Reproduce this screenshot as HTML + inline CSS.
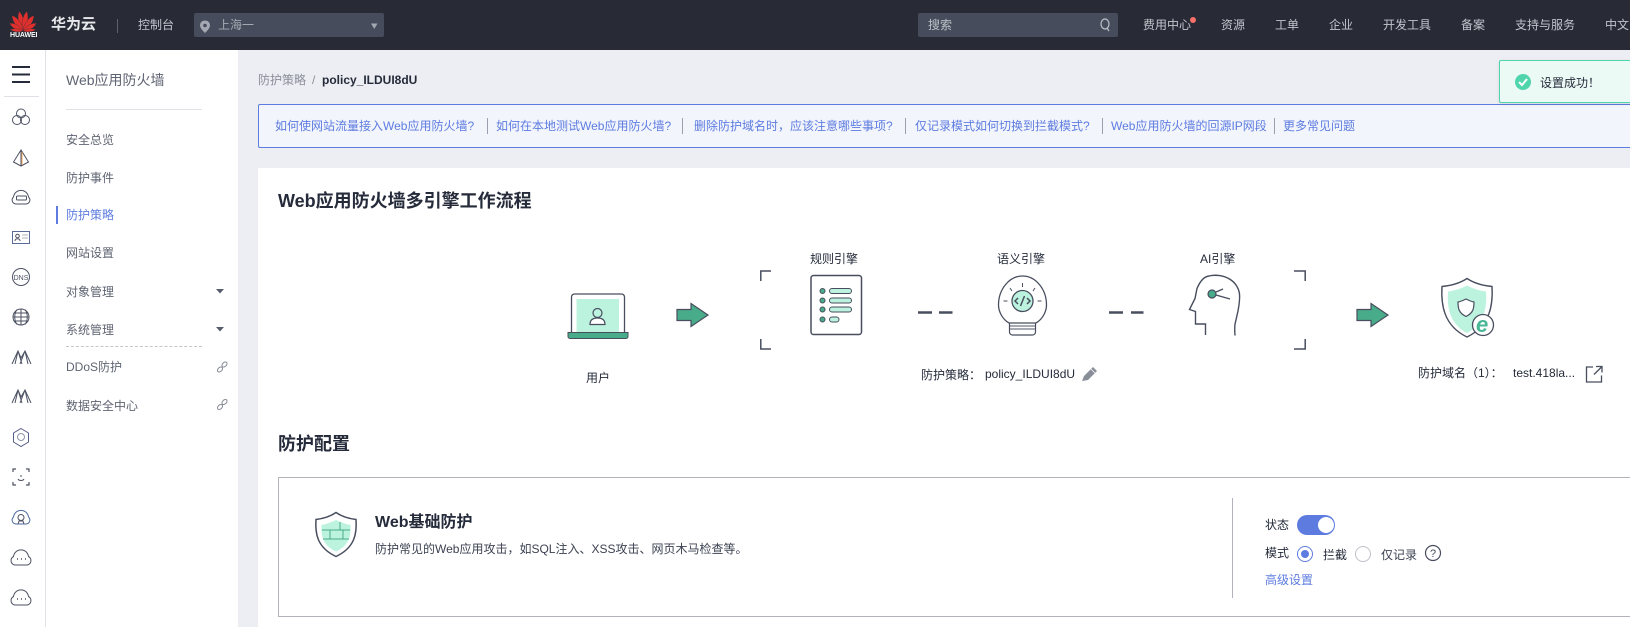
<!DOCTYPE html>
<html lang="zh-CN"><head><meta charset="utf-8"><title>Web应用防火墙</title>
<style>
html,body{margin:0;padding:0;width:1630px;height:627px;overflow:hidden;background:#edeef3}
body{font-family:"Liberation Sans","Noto Sans CJK SC",sans-serif;font-size:12px;color:#252b3a;position:relative}
.b{position:absolute}
.t{position:absolute;white-space:nowrap;line-height:16px;height:16px}
.n{color:#c2c5cc}
.m{color:#5f6472}
.l{color:#5e7ce0}
.h{font-weight:bold;color:#252b3a}
svg{position:absolute;left:0;top:0}
</style></head><body>
<div class="b" style="left:0;top:0;width:1630px;height:50px;background:#282b35"></div>
<div class="b" style="left:918px;top:13px;width:200px;height:24px;background:#464c5b;border-radius:2px"></div>
<div class="b" style="left:194px;top:13px;width:190px;height:24px;background:#464c5b;border-radius:2px"></div>
<div class="b" style="left:117px;top:19px;width:1px;height:14px;background:#5b606d"></div>
<div class="b" style="left:0;top:50px;width:45px;height:577px;background:#fff"></div>
<div class="b" style="left:45px;top:50px;width:1px;height:577px;background:#dfe1e6"></div>
<div class="b" style="left:46px;top:50px;width:192px;height:577px;background:#fff"></div>
<div class="b" style="left:4px;top:96px;width:35px;height:1px;background:#dfe1e6"></div>
<div class="b" style="left:66px;top:109px;width:136px;height:1px;background:#dfe1e6"></div>
<div class="b" style="left:66px;top:346px;width:136px;height:0;border-top:1px dashed #c4c6cc"></div>
<div class="b" style="left:56px;top:206px;width:2px;height:18px;background:#5e7ce0"></div>
<div class="b" style="left:258px;top:104px;width:1372px;height:42px;background:#f2f5fc;border:1px solid #5e7ce0;border-right:0;border-radius:2px 0 0 2px"></div>
<div class="b" style="left:258px;top:168px;width:1372px;height:459px;background:#fff"></div>
<div class="b" style="left:278px;top:477px;width:1352px;height:138px;border:1px solid #b3b3bb;border-right:0;background:#fff"></div>
<div class="b" style="left:1232px;top:498px;width:1px;height:100px;background:#b3b3bb"></div>
<div class="b" style="left:1499px;top:60px;width:131px;height:41px;background:#ebfaf5;border:1px solid #50d4ab;border-right:0;border-radius:2px 0 0 2px;box-shadow:0 1px 3px rgba(0,0,0,.1)"></div>

<span class="t" style="left:51px;top:16px;font-size:15px;line-height:18px;height:18px;font-weight:bold;color:#e8e9ec">华为云</span>
<span class="t n" style="left:138px;top:17px">控制台</span>
<span class="t" style="left:218px;top:17px;color:#a6a9b2">上海一</span>
<span class="t" style="left:928px;top:17px;color:#bfc2c9">搜索</span>
<span class="t n" style="left:1143px;top:17px">费用中心</span>
<span class="t n" style="left:1221px;top:17px">资源</span>
<span class="t n" style="left:1275px;top:17px">工单</span>
<span class="t n" style="left:1329px;top:17px">企业</span>
<span class="t n" style="left:1383px;top:17px">开发工具</span>
<span class="t n" style="left:1461px;top:17px">备案</span>
<span class="t n" style="left:1515px;top:17px">支持与服务</span>
<span class="t n" style="left:1605px;top:17px">中文</span>
<span class="t" style="left:10px;top:32px;font-size:7px;line-height:8px;height:8px;font-weight:bold;color:#fff;letter-spacing:-.1px">HUAWEI</span>

<span class="t m" style="left:66px;top:72px;font-size:14px">Web应用防火墙</span>
<span class="t m" style="left:66px;top:132px">安全总览</span>
<span class="t m" style="left:66px;top:170px">防护事件</span>
<span class="t l" style="left:66px;top:207px">防护策略</span>
<span class="t m" style="left:66px;top:245px">网站设置</span>
<span class="t m" style="left:66px;top:284px">对象管理</span>
<span class="t m" style="left:66px;top:322px">系统管理</span>
<span class="t m" style="left:66px;top:359px">DDoS防护</span>
<span class="t m" style="left:66px;top:398px">数据安全中心</span>

<span class="t" style="left:258px;top:72px;color:#8a8e99">防护策略</span>
<span class="t" style="left:312px;top:72px;color:#8a8e99">/</span>
<span class="t" style="left:322px;top:72px;color:#252b3a;font-weight:bold;font-size:12px">policy_ILDUI8dU</span>
<span class="t" style="left:1540px;top:75px;color:#252b3a">设置成功！</span>

<span class="t l" style="left:275px;top:118px">如何使网站流量接入Web应用防火墙?</span>
<span class="t l" style="left:496px;top:118px">如何在本地测试Web应用防火墙?</span>
<span class="t l" style="left:694px;top:118px">删除防护域名时，应该注意哪些事项?</span>
<span class="t l" style="left:915px;top:118px">仅记录模式如何切换到拦截模式?</span>
<span class="t l" style="left:1111px;top:118px">Web应用防火墙的回源IP网段</span>
<span class="t l" style="left:1283px;top:118px">更多常见问题</span>
<div class="b" style="left:487px;top:118px;width:1px;height:16px;background:#9aa0ad"></div>
<div class="b" style="left:682px;top:118px;width:1px;height:16px;background:#9aa0ad"></div>
<div class="b" style="left:905px;top:118px;width:1px;height:16px;background:#9aa0ad"></div>
<div class="b" style="left:1102px;top:118px;width:1px;height:16px;background:#9aa0ad"></div>
<div class="b" style="left:1274px;top:118px;width:1px;height:16px;background:#9aa0ad"></div>

<span class="t h" style="left:278px;top:190px;font-size:18px;line-height:22px;height:22px">Web应用防火墙多引擎工作流程</span>
<span class="t" style="left:810px;top:251px">规则引擎</span>
<span class="t" style="left:997px;top:251px">语义引擎</span>
<span class="t" style="left:1200px;top:251px">AI引擎</span>
<span class="t" style="left:586px;top:370px">用户</span>
<span class="t" style="left:921px;top:367px">防护策略：</span>
<span class="t" style="left:985px;top:366px">policy_ILDUI8dU</span>
<span class="t" style="left:1418px;top:365px">防护域名（1）：</span>
<span class="t" style="left:1513px;top:365px">test.418la...</span>
<span class="t h" style="left:278px;top:433px;font-size:18px;line-height:22px;height:22px">防护配置</span>
<span class="t h" style="left:375px;top:513px;font-size:16px;line-height:20px;height:20px">Web基础防护</span>
<span class="t" style="left:375px;top:541px;color:#3c4252">防护常见的Web应用攻击，如SQL注入、XSS攻击、网页木马检查等。</span>
<span class="t" style="left:1265px;top:517px">状态</span>
<span class="t" style="left:1265px;top:545px">模式</span>
<span class="t" style="left:1323px;top:547px">拦截</span>
<span class="t" style="left:1381px;top:547px;color:#3c4252">仅记录</span>
<span class="t l" style="left:1265px;top:572px">高级设置</span>

<svg width="1630" height="627" viewBox="0 0 1630 627" fill="none">
<!-- Huawei logo -->
<defs><linearGradient id="r" x1="0" y1="11" x2="0" y2="31" gradientUnits="userSpaceOnUse"><stop offset="0" stop-color="#f0504a"/><stop offset="1" stop-color="#c8101c"/></linearGradient></defs>
<g fill="#e0302e" stroke="#282b35" stroke-width=".3">
<path transform="rotate(-11 23 31)" d="M23 31C19.500 25 19.500 16 23 11C26.500 16 26.500 25 23 31Z"/>
<path transform="rotate(11 23 31)" d="M23 31C19.500 25 19.500 16 23 11C26.500 16 26.500 25 23 31Z"/>
<path transform="rotate(-35 23 31)" d="M23 31C19.500 26 19.500 17 23 12C26.500 17 26.500 26 23 31Z"/>
<path transform="rotate(35 23 31)" d="M23 31C19.500 26 19.500 17 23 12C26.500 17 26.500 26 23 31Z"/>
<path transform="rotate(-60 23 31)" d="M23 31C20 26 20 20 23 15.500C26 20 26 26 23 31Z"/>
<path transform="rotate(60 23 31)" d="M23 31C20 26 20 20 23 15.500C26 20 26 26 23 31Z"/>
<path transform="rotate(-84 23 31)" d="M23 31C21 27 21 22 23 18C25 22 25 27 23 31Z"/>
<path transform="rotate(84 23 31)" d="M23 31C21 27 21 22 23 18C25 22 25 27 23 31Z"/>
</g>
<!-- pin and caret -->
<path d="M205 20.500c-3 0-5 2-5 5 0 3 5 7.500 5 7.500s5-4.500 5-7.500c0-3-2-5-5-5z" fill="#a4a8b2"/><circle cx="205" cy="25.500" r="1.800" fill="#464c5b"/>
<path d="M371 23.500h6.500l-3.250 5.500z" fill="#a4a8b2"/>
<!-- search -->
<ellipse cx="1105" cy="24" rx="4" ry="5" stroke="#bfc2c9" stroke-width="1.200"/><path d="M1107 28l2 3" stroke="#bfc2c9" stroke-width="1.200"/>
<circle cx="1193" cy="20" r="3" fill="#f66f6a"/>
<!-- hamburger -->
<path d="M12 67h18M12 74.500h18M12 82h18" stroke="#252b3a" stroke-width="2"/>
<!-- rail icons -->
<g stroke="#4d5263" stroke-width="1">
<circle cx="21" cy="113.500" r="4.500"/><circle cx="17" cy="120" r="4.500"/><circle cx="25" cy="120" r="4.500"/>
<path d="M21 150v16M21 150l-7.500 12 7.500 4 7.500-4z"/><path d="M22 152v13" stroke="#f0a860"/>
<path d="M16 204a4 4 0 0 1-2.500-7a7.550 7.550 0 0 1 15 0a4 4 0 0 1-2.500 7z"/><rect x="16.500" y="196" width="10" height="4" rx="1"/>
<rect x="12.500" y="231.500" width="17" height="12" stroke="#5a6a9a"/><circle cx="17.500" cy="236" r="1.800"/><path d="M15 241c0-3 5-3 5 0"/><path d="M22 235h6M22 238h6" stroke="#b0b3bd"/>
<circle cx="21" cy="277" r="8.500"/>
<circle cx="21" cy="317" r="8"/><path d="M13 317h16M21 309v16M17 309.500c-3 4-3 11 0 15M25 309.500c3 4 3 11 0 15M14.500 313h13M14.500 321h13"/>
<path d="M12 364L18 351L21 358L25 351L31 364M15 364L18 351M28 364L25 351M18 351L22 364M25 351L20 364"/>
<path d="M12 403L18 390L21 397L25 390L31 403M15 403L18 390M28 403L25 390M18 390L22 403M25 390L20 403"/>
<path d="M21 428.500l7.500 4.500v9l-7.500 4.500-7.500-4.500v-9z" stroke="#5a5f88"/><circle cx="21" cy="437" r="3.500" stroke="#8f95a8"/>
<path d="M13 472v-3h3M26 469h3v3M13 482v3h3M26 485h3v-3" stroke-width="1.200"/><path d="M18 479c1 2 5 2 6 0M21 475v2"/>
<path d="M16 524a4 4 0 0 1-2.500-7a7.550 7.550 0 0 1 15 0a4 4 0 0 1-2.500 7z" stroke="#4f6a9f"/><circle cx="21" cy="517.500" r="3"/><path d="M18 524l1-3h4l1 3"/>
<path d="M16 565a4.500 4.500 0 0 1-2.500-8.500a7.550 7.550 0 0 1 15 0a4.500 4.500 0 0 1-2.500 8.500z"/><path d="M17 559h1M21 559h1M25 559h1" stroke-width="1.500"/>
<path d="M16 605a4.500 4.500 0 0 1-2.500-8.500a7.550 7.550 0 0 1 15 0a4.500 4.500 0 0 1-2.500 8.500z"/><path d="M17 599h1M21 599h1M25 599h1" stroke-width="1.500"/>
</g>
<text x="21" y="280" text-anchor="middle" font-family="Liberation Sans,sans-serif" font-size="7" fill="#4d5263">DNS</text>
<!-- nav carets and links -->
<path d="M216 289h8l-4 4.500zM216 327h8l-4 4.500z" fill="#575d6c"/>
<g stroke="#8a8e99" stroke-width="1">
<ellipse cx="220" cy="369.500" rx="3" ry="2" transform="rotate(-45 220 369.500)"/><ellipse cx="224.500" cy="364.500" rx="3" ry="2" transform="rotate(-45 224.500 364.500)"/>
<ellipse cx="220" cy="407" rx="3" ry="2" transform="rotate(-45 220 407)"/><ellipse cx="224.500" cy="402" rx="3" ry="2" transform="rotate(-45 224.500 402)"/>
</g>
<!-- toast check -->
<circle cx="1523" cy="82" r="8" fill="#50d4ab"/><path d="M1519 82l3 3 5-6" stroke="#fff" stroke-width="2"/>
<!-- laptop -->
<path d="M571.500 332v-35a3 3 0 0 1 3-3h47a3 3 0 0 1 3 3v35" stroke="#484e5e" stroke-width="1.300"/>
<rect x="576.500" y="299" width="42.500" height="33" fill="#bcf3df"/>
<path d="M568 332.500h60v4a2 2 0 0 1-2 2h-56a2 2 0 0 1-2-2z" fill="#48ab8a" stroke="#484e5e" stroke-width="1"/>
<circle cx="597.500" cy="313" r="4.500" stroke="#484e5e" stroke-width="1.200"/><path d="M590 324.500c0-5 3-6.500 7.500-6.500s7.500 1.500 7.500 6.500z" stroke="#484e5e" stroke-width="1.200" fill="#fff"/>
<!-- arrows -->
<path d="M677 309.500h14v-6l17 11.500-17 11.500v-6h-14z" fill="#48ab8a" stroke="#484e5e" stroke-width="1.200"/>
<path d="M1357 309.500h14v-6l17 11.500-17 11.500v-6h-14z" fill="#48ab8a" stroke="#484e5e" stroke-width="1.200"/>
<!-- brackets -->
<g stroke="#484e5e" stroke-width="1.500"><path d="M771 271h-10.200v10M771 349h-10.200v-10M1294 271h11.200v10M1294 349h11.200v-10"/></g>
<!-- doc -->
<rect x="811" y="275.500" width="50.500" height="59" rx="2.500" stroke="#484e5e" stroke-width="1.500"/>
<g fill="#48ab8a" stroke="#484e5e" stroke-width="1"><circle cx="822.500" cy="291" r="2.500"/><circle cx="822.500" cy="300.500" r="2.500"/><circle cx="822.500" cy="309.500" r="2.500"/><circle cx="822.500" cy="319.500" r="2.500"/></g>
<g fill="#bcf3df" stroke="#484e5e" stroke-width="1"><rect x="829.500" y="288.500" width="22" height="5" rx="2.500"/><rect x="829.500" y="298" width="22" height="5" rx="2.500"/><rect x="829.500" y="307" width="22" height="5" rx="2.500"/><rect x="829.500" y="317" width="9.500" height="5" rx="2.500"/></g>
<!-- dashes -->
<path d="M918 312.500h14M939 312.500h13.500M1109 312.500h14M1131 312.500h12.500" stroke="#484e5e" stroke-width="2.500"/>
<!-- bulb -->
<path d="M1009 323c-7-4-10.500-12-10.500-18 0-16 11-29 24-29s24 13 24 29c0 6-3.500 14-10.500 18" stroke="#484e5e" stroke-width="1.300"/>
<path d="M1009.500 323v9a3 3 0 0 0 3 3h20a3 3 0 0 0 3-3v-9z" fill="#fff" stroke="#484e5e" stroke-width="1.200"/>
<path d="M1010 326h25M1010 329h25" stroke="#8a8e99" stroke-width="1.500"/>
<circle cx="1022.500" cy="301" r="10.500" fill="#bcf3df" stroke="#484e5e" stroke-width="1.300"/>
<path d="M1018 298l-3 3 3 3M1027 298l3 3-3 3M1024.500 296l-4 10" stroke="#484e5e" stroke-width="1.500"/>
<path d="M1022.500 283v4M1010 288l2 3M1035 288l-2 3M1003.500 301h4M1037.500 301h4" stroke="#484e5e" stroke-width="1"/>
<!-- head -->
<path d="M1205.500 335v-11h-10v-12.500l-6-2 5.500-11 2-10c3-7 7-12 12-12.500 6-1.500 15-1 22 4 5 3.500 8 9 8.500 14s0 9-1.500 17l-2.500 11c-1 3-1 7-.5 13.500" stroke="#484e5e" stroke-width="1.400"/>
<circle cx="1212" cy="294" r="4" fill="#48ab8a" stroke="#484e5e" stroke-width="1.200"/>
<path d="M1216 292l7-3M1216 295l14 4" stroke="#484e5e" stroke-width="1.300"/>
<!-- target shield -->
<path d="M1467 278.500c6 4 15 7 25 8 1 17-1 39-25 50.500-24-11.500-26-33.500-25-50.500 10-1 19-4 25-8z" stroke="#484e5e" stroke-width="1.400" fill="#fff"/>
<path d="M1467 285.500c6 3 12 5 19 6 1 15-1 32-19 41.500-18-9.500-20-26.500-19-41.500 7-1 13-3 19-6z" fill="#bcf3df"/>
<path d="M1466 299c3 1.500 5 2.500 8 3 0 7-1 11-8 14.500-7-3.500-8-7.500-8-14.500 3-.5 5-1.500 8-3z" fill="#fff" stroke="#484e5e" stroke-width="1.200"/>
<circle cx="1483" cy="325" r="10.500" fill="#fff" stroke="#484e5e" stroke-width="1.300"/>
<text x="1476" y="332" font-family="Liberation Sans,sans-serif" font-size="22" font-style="italic" font-weight="bold" fill="#48b894">e</text>
<!-- edit -->
<path d="M1082 381l2-5 9-9 4 4-9 9z" fill="#8a8e99"/><path d="M1091 369l4 4" stroke="#fff" stroke-width=".7"/>
<!-- external -->
<path d="M1593 367h-6.500v15h15v-6.500M1594 374.500l7.500-7.500M1596 366.500h6v6" stroke="#484e5e" stroke-width="1.300"/>
<!-- wall shield -->
<path d="M336 512.500c5 3.500 12 6 20 7 1 14-1 28-20 37-19-9-21-23-20-37 8-1 15-3.500 20-7z" stroke="#484e5e" stroke-width="1.500" fill="#fff"/>
<path d="M336 520c4 2 9 4 14.500 5 .5 11-1 20-14.500 26.500-13.500-6.500-15-15.500-14.500-26.500 5.500-1 10.500-3 14.500-5z" fill="#bcf3df"/>
<path d="M322 530h28M323 539h26M340 522v8M330 530v9M343 530v9" stroke="#48ab8a" stroke-width="1"/>
<!-- toggle -->
<rect x="1297" y="515" width="38" height="20" rx="10" fill="#5e7ce0"/><circle cx="1326" cy="525" r="8" fill="#fff"/>
<!-- radios -->
<circle cx="1305" cy="554" r="7.500" fill="#fff" stroke="#5e7ce0"/><circle cx="1305" cy="554" r="4" fill="#5e7ce0"/>
<circle cx="1363" cy="554" r="7.500" fill="#fff" stroke="#bfc1c7"/>
<circle cx="1433" cy="553" r="7.500" stroke="#484e5e" stroke-width="1.200"/>
<text x="1433" y="557" text-anchor="middle" font-family="Liberation Sans,sans-serif" font-size="11" fill="#484e5e">?</text>
</svg>
</body></html>
